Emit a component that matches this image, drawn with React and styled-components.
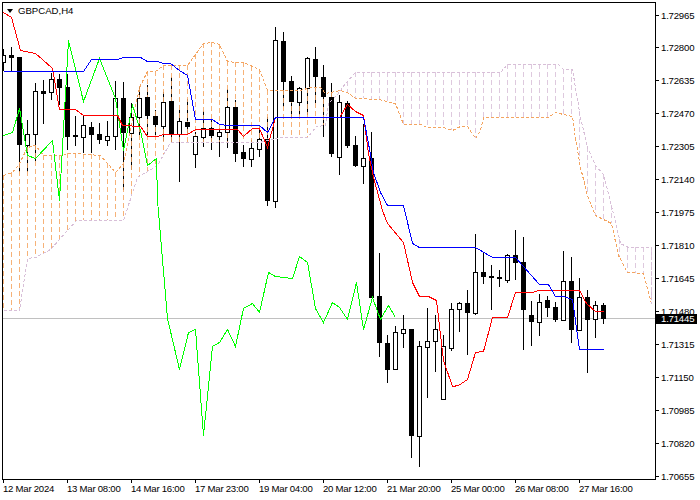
import React from 'react';
import styled, { createGlobalStyle } from 'styled-components';

// [high, bodyTop, bodyBottom, low, white body?] one bar every 8px, first at x=3
const candles = [
    [49, 55, 62, 71, 1], [47, 55, 58, 71, 0], [57, 57, 145, 172, 0], [120, 134, 145, 172, 1],
    [83, 91, 134, 161, 1], [80, 91, 94, 124, 0], [73, 79, 92, 100, 1], [74, 79, 88, 105, 0],
    [74, 87, 137, 150, 0], [116, 135, 137, 146, 0], [115, 125, 137, 153, 1], [122, 127, 135, 153, 0],
    [123, 134, 140, 144, 0], [121, 136, 140, 146, 1], [81, 98, 136, 150, 1], [82, 98, 133, 190, 0],
    [103, 117, 133, 170, 1], [86, 98, 117, 135, 1], [85, 97, 116, 135, 0], [110, 116, 125, 135, 0],
    [92, 102, 126, 141, 1], [77, 101, 134, 143, 0], [110, 121, 134, 182, 1], [99, 122, 127, 135, 0],
    [132, 136, 154, 168, 1], [111, 128, 137, 147, 1], [120, 128, 136, 150, 0], [128, 132, 136, 157, 1],
    [89, 107, 132, 148, 1], [100, 107, 154, 162, 0], [145, 152, 159, 167, 0], [140, 148, 159, 167, 1],
    [125, 139, 149, 157, 1], [117, 139, 201, 206, 0], [27, 40, 201, 208, 1], [32, 41, 82, 107, 0],
    [76, 81, 102, 117, 0], [87, 88, 102, 115, 1], [57, 58, 88, 115, 1], [47, 59, 77, 103, 0],
    [65, 77, 97, 137, 0], [83, 97, 154, 157, 0], [95, 102, 157, 175, 1], [101, 103, 146, 148, 0],
    [136, 145, 166, 167, 0], [124, 158, 166, 184, 1], [132, 158, 298, 298, 0], [253, 296, 343, 357, 0],
    [335, 343, 370, 383, 0], [326, 332, 369, 370, 1], [315, 329, 333, 348, 1], [329, 329, 436, 458, 0],
    [341, 346, 436, 467, 1], [308, 341, 347, 398, 1], [315, 329, 341, 372, 1], [335, 346, 399, 399, 1],
    [303, 309, 348, 351, 1], [302, 303, 309, 332, 1], [290, 303, 313, 355, 0], [234, 272, 313, 315, 1],
    [252, 272, 277, 284, 0], [265, 276, 278, 310, 0], [270, 277, 279, 287, 0], [254, 255, 280, 283, 1],
    [230, 255, 263, 280, 0], [237, 262, 310, 350, 0], [301, 315, 322, 346, 0], [294, 302, 322, 336, 1],
    [296, 300, 308, 317, 0], [302, 307, 320, 322, 0], [251, 281, 320, 321, 1], [257, 281, 330, 343, 0],
    [278, 297, 330, 330, 1], [290, 297, 320, 373, 0], [301, 305, 319, 338, 1], [303, 305, 319, 324, 0],
];

const tenkan = [
    [3, 12], [11, 17], [20, 50], [35, 53], [42, 59], [52, 68], [59, 109], [75, 109], [83, 115], [117, 115],
    [122, 125], [140, 126], [147, 136], [157, 136], [163, 134], [187, 134], [195, 129], [237, 129], [243, 136],
    [252, 128], [259, 128], [267, 147], [275, 117], [339, 117], [347, 104], [355, 111], [363, 115], [368, 153],
    [373, 177], [382, 210], [387, 223], [403, 242], [412, 282], [419, 296], [428, 296], [436, 300], [443, 360],
    [452, 386], [458, 385], [467, 379], [475, 352], [483, 351], [492, 317], [507, 317], [515, 292], [532, 292],
    [538, 290], [579, 290], [586, 303], [595, 311], [603, 311],
];

const kijun = [
    [3, 71], [83, 71], [91, 59], [117, 59], [123, 57], [140, 57], [147, 61], [157, 61], [163, 63], [170, 63],
    [179, 70], [187, 75], [195, 119], [212, 119], [219, 124], [227, 125], [259, 125], [267, 132], [275, 117],
    [363, 117], [368, 143], [373, 172], [380, 192], [387, 205], [403, 205], [412, 243], [419, 247], [475, 247],
    [492, 257], [515, 257], [539, 284], [548, 284], [555, 296], [563, 296], [572, 299], [579, 349], [603, 349],
];

const chikou = [
    [3, 135], [12, 132], [19, 108], [27, 155], [35, 158], [52, 140], [59, 200], [68, 40], [83, 101], [99, 58],
    [115, 98], [123, 150], [132, 105], [140, 130], [147, 165], [156, 158], [157, 200], [167, 318], [179, 369],
    [188, 332], [195, 329], [203, 435], [212, 346], [219, 342], [227, 329], [235, 346], [243, 308], [252, 303],
    [259, 312], [268, 272], [275, 276], [292, 278], [299, 256], [307, 262], [315, 308], [323, 322], [332, 302],
    [339, 307], [347, 319], [356, 282], [363, 329], [372, 297], [380, 319], [388, 305], [395, 317],
];

const spanA = [
    [3, 175], [12, 172], [19, 163], [27, 147], [35, 145], [43, 155], [59, 155], [68, 153], [75, 153], [100, 155],
    [115, 172], [123, 163], [139, 87], [147, 71], [155, 71], [163, 65], [187, 65], [203, 43], [212, 42], [219, 44],
    [227, 61], [236, 62], [243, 62], [259, 69], [267, 90], [300, 90], [310, 87], [320, 87], [325, 93], [340, 90],
    [347, 92], [355, 98], [378, 99], [395, 103], [403, 124], [420, 124], [427, 127], [443, 127], [452, 130],
    [460, 126], [467, 126], [475, 138], [480, 130], [483, 117], [548, 117], [555, 112], [563, 114], [572, 116],
    [575, 138], [580, 167], [587, 195], [595, 215], [611, 223], [618, 255], [627, 272], [643, 273], [651, 303],
];

const spanB = [
    [3, 310], [19, 310], [27, 258], [35, 257], [50, 249], [67, 230], [76, 220], [123, 220], [137, 177], [157, 165],
    [170, 142], [259, 142], [280, 137], [307, 137], [316, 126], [325, 125], [328, 103], [337, 94], [345, 83],
    [355, 72], [500, 72], [507, 64], [558, 64], [563, 69], [572, 69], [580, 117], [587, 147], [595, 165], [603, 174],
    [613, 213], [620, 243], [628, 247], [651, 247], [651, 303],
];

const prices = [
    '1.72965', '1.72800', '1.72635', '1.72470', '1.72305', '1.72140', '1.71975', '1.71810',
    '1.71645', '1.71480', '1.71315', '1.71150', '1.70985', '1.70820', '1.70655',
];

const times = [
    '12 Mar 2024', '13 Mar 08:00', '14 Mar 16:00', '17 Mar 23:00', '19 Mar 04:00',
    '20 Mar 12:00', '21 Mar 20:00', '25 Mar 00:00', '26 Mar 08:00', '27 Mar 16:00',
];

const toPoints = (line) => line.map(([x, y]) => `${x + 0.5},${y + 0.5}`).join(' ');

function yAt(line, x) {
    for (let i = 1; i < line.length; i++) {
        const [x0, y0] = line[i - 1];
        const [x1, y1] = line[i];
        if (x <= x1 && x1 > x0) return y0 + ((y1 - y0) * (x - x0)) / (x1 - x0);
    }
    return line[line.length - 1][1];
}

function Candles() {
    return (
        <>
            {candles.map(([high, top, bottom, low, white], i) => {
                const x = 3 + i * 8;
                return white ? (
                    <rect key={i} x={x - 1.5} y={top + 0.5} width={4} height={bottom - top} fill="#fff" stroke="#000" />
                ) : (
                    <rect key={i} x={x - 2} y={top} width={5} height={Math.max(bottom - top, 1)} fill="#000" />
                );
            })}
        </>
    );
}

function Wicks() {
    return candles.map(([high, , , low], i) => {
        const x = 3 + i * 8 + 0.5;
        return <line key={i} x1={x} x2={x} y1={high} y2={low} stroke="#000" />;
    });
}

function Hatching() {
    const bars = [];
    for (let x = 3; x <= 651; x += 8) {
        const a = yAt(spanA, x);
        const b = yAt(spanB, x);
        bars.push(
            <line
                key={x}
                x1={x + 0.5}
                x2={x + 0.5}
                y1={Math.min(a, b)}
                y2={Math.max(a, b)}
                stroke={a < b ? '#f4a460' : '#d8bfd8'}
                strokeOpacity="0.85"
                strokeDasharray="5 3"
            />
        );
    }
    return bars;
}

function App() {
    return (
        <Page>
            <GlobalStyle />
            <Plot>
                <Chart viewBox="3 3 652 476" width="652" height="476" shapeRendering="crispEdges">
                    <line x1="3" x2="655" y1="318.5" y2="318.5" stroke="#c0c0c0" />
                    <Wicks />
                    <Hatching />
                    <Candles />
                    <Trace points={toPoints(spanA)} stroke="#f4a460" strokeDasharray="3 2" />
                    <Trace points={toPoints(spanB)} stroke="#d8bfd8" strokeDasharray="3 2" />
                    <Trace points={toPoints(chikou)} stroke="#00ff00" />
                    <Trace points={toPoints(tenkan)} stroke="#ff0000" />
                    <Trace points={toPoints(kijun)} stroke="#0000ff" />
                </Chart>
                <SymbolTag>
                    <Arrow />
                    GBPCAD,H4
                </SymbolTag>
            </Plot>
            <PriceAxis>
                {prices.map((price) => (
                    <PriceLabel key={price}>{price}</PriceLabel>
                ))}
                <PriceTag>1.71445</PriceTag>
            </PriceAxis>
            <TimeAxis>
                {times.map((time) => (
                    <TimeLabel key={time}>{time}</TimeLabel>
                ))}
            </TimeAxis>
        </Page>
    );
}

export default App;

const GlobalStyle = createGlobalStyle`
    html, body {
        margin: 0;
        background: #fff;
    }
`;

const Page = styled.div`
    display: grid;
    grid-template-columns: 654px 44px;
    grid-template-rows: 478px 20px;
    width: 700px;
    height: 500px;
    padding: 2px 0 0 2px;
    box-sizing: border-box;
    overflow: hidden;
    font-family: "Liberation Sans", Arial, sans-serif;
    font-size: 9.6px;
    color: #000;
`;

const Plot = styled.div`
    position: relative;
    border: 1px solid #000;
    box-sizing: border-box;
`;

const Chart = styled.svg`
    display: block;
`;

const Trace = styled.polyline`
    fill: none;
    stroke-width: 1;
`;

const SymbolTag = styled.div`
    position: absolute;
    top: 1px;
    left: 4px;
    display: flex;
    align-items: center;
    gap: 5px;
    font-size: 9.6px;
    line-height: 13px;
`;

const Arrow = styled.span`
    width: 0;
    height: 0;
    border-left: 3.5px solid transparent;
    border-right: 3.5px solid transparent;
    border-top: 4px solid #000;
`;

const PriceAxis = styled.div`
    position: relative;
    grid-row: 1 / span 2;
    grid-column: 2;
    display: flex;
    flex-direction: column;
    justify-content: space-between;
    height: 473.5px;
    margin-top: 7px;
`;

const PriceLabel = styled.div`
    display: flex;
    align-items: center;
    gap: 2px;
    height: 12px;
    letter-spacing: -0.2px;

    &::before {
        content: '';
        width: 3px;
        height: 1px;
        background: #000;
    }
`;

const PriceTag = styled.div`
    position: absolute;
    top: 305px;
    left: 0;
    width: 41px;
    height: 10px;
    padding-left: 5px;
    box-sizing: border-box;
    background: #000;
    color: #fff;
    line-height: 10px;
    letter-spacing: -0.2px;
`;

const TimeAxis = styled.div`
    grid-row: 2;
    grid-column: 1;
    display: flex;
    padding-left: 1px;
`;

const TimeLabel = styled.div`
    display: flex;
    flex-direction: column;
    flex: 0 0 64px;
    line-height: 12px;
    letter-spacing: -0.25px;
    white-space: nowrap;

    &::before {
        content: '';
        width: 1px;
        height: 3px;
        background: #000;
    }
`;
